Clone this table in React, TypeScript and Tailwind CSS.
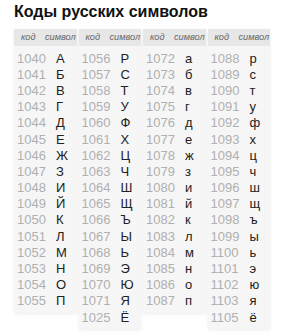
const tables: [string, string][][] = [
  [
    ['1040', 'А'], ['1041', 'Б'], ['1042', 'В'], ['1043', 'Г'], ['1044', 'Д'], ['1045', 'Е'],
    ['1046', 'Ж'], ['1047', 'З'], ['1048', 'И'], ['1049', 'Й'], ['1050', 'К'], ['1051', 'Л'],
    ['1052', 'М'], ['1053', 'Н'], ['1054', 'О'], ['1055', 'П'],
  ],
  [
    ['1056', 'Р'], ['1057', 'С'], ['1058', 'Т'], ['1059', 'У'], ['1060', 'Ф'], ['1061', 'Х'],
    ['1062', 'Ц'], ['1063', 'Ч'], ['1064', 'Ш'], ['1065', 'Щ'], ['1066', 'Ъ'], ['1067', 'Ы'],
    ['1068', 'Ь'], ['1069', 'Э'], ['1070', 'Ю'], ['1071', 'Я'], ['1025', 'Ё'],
  ],
  [
    ['1072', 'а'], ['1073', 'б'], ['1074', 'в'], ['1075', 'г'], ['1076', 'д'], ['1077', 'е'],
    ['1078', 'ж'], ['1079', 'з'], ['1080', 'и'], ['1081', 'й'], ['1082', 'к'], ['1083', 'л'],
    ['1084', 'м'], ['1085', 'н'], ['1086', 'о'], ['1087', 'п'],
  ],
  [
    ['1088', 'р'], ['1089', 'с'], ['1090', 'т'], ['1091', 'у'], ['1092', 'ф'], ['1093', 'х'],
    ['1094', 'ц'], ['1095', 'ч'], ['1096', 'ш'], ['1097', 'щ'], ['1098', 'ъ'], ['1099', 'ы'],
    ['1100', 'ь'], ['1101', 'э'], ['1102', 'ю'], ['1103', 'я'], ['1105', 'ё'],
  ],
];

function CodeTable({ rows }: { rows: [string, string][] }) {
  return (
    <div className="w-[64px] bg-[#f6f6f6] shadow-[0_1px_3px_rgba(0,0,0,0.08)] pb-[4px]">
      <div className="flex h-[17px] items-center bg-[#e7e7e7] text-[9.2px] italic text-[#666]">
        <span className="w-[31px] pl-[7px]">код</span>
        <span>символ</span>
      </div>
      <div className="pt-[4px]">
        {rows.map(([code, letter]) => (
          <div key={code} className="flex h-[16.2px] items-center text-[13px] leading-none">
            <span className="w-[42px] pl-[3px] text-[#b0b0b0]">{code}</span>
            <span className="text-[#222]">{letter}</span>
          </div>
        ))}
      </div>
    </div>
  );
}

export default function App() {
  return (
    <div className="w-[284px] h-[333px] bg-white px-[14px] pt-[2px] font-['Liberation_Sans',Arial,sans-serif]">
      <h1 className="text-[16px] font-bold leading-[20px] text-[#111]">Коды русских символов</h1>
      <div className="mt-[7px] flex items-start gap-[2px]">
        {tables.map((rows, i) => (
          <CodeTable key={i} rows={rows} />
        ))}
      </div>
    </div>
  );
}
